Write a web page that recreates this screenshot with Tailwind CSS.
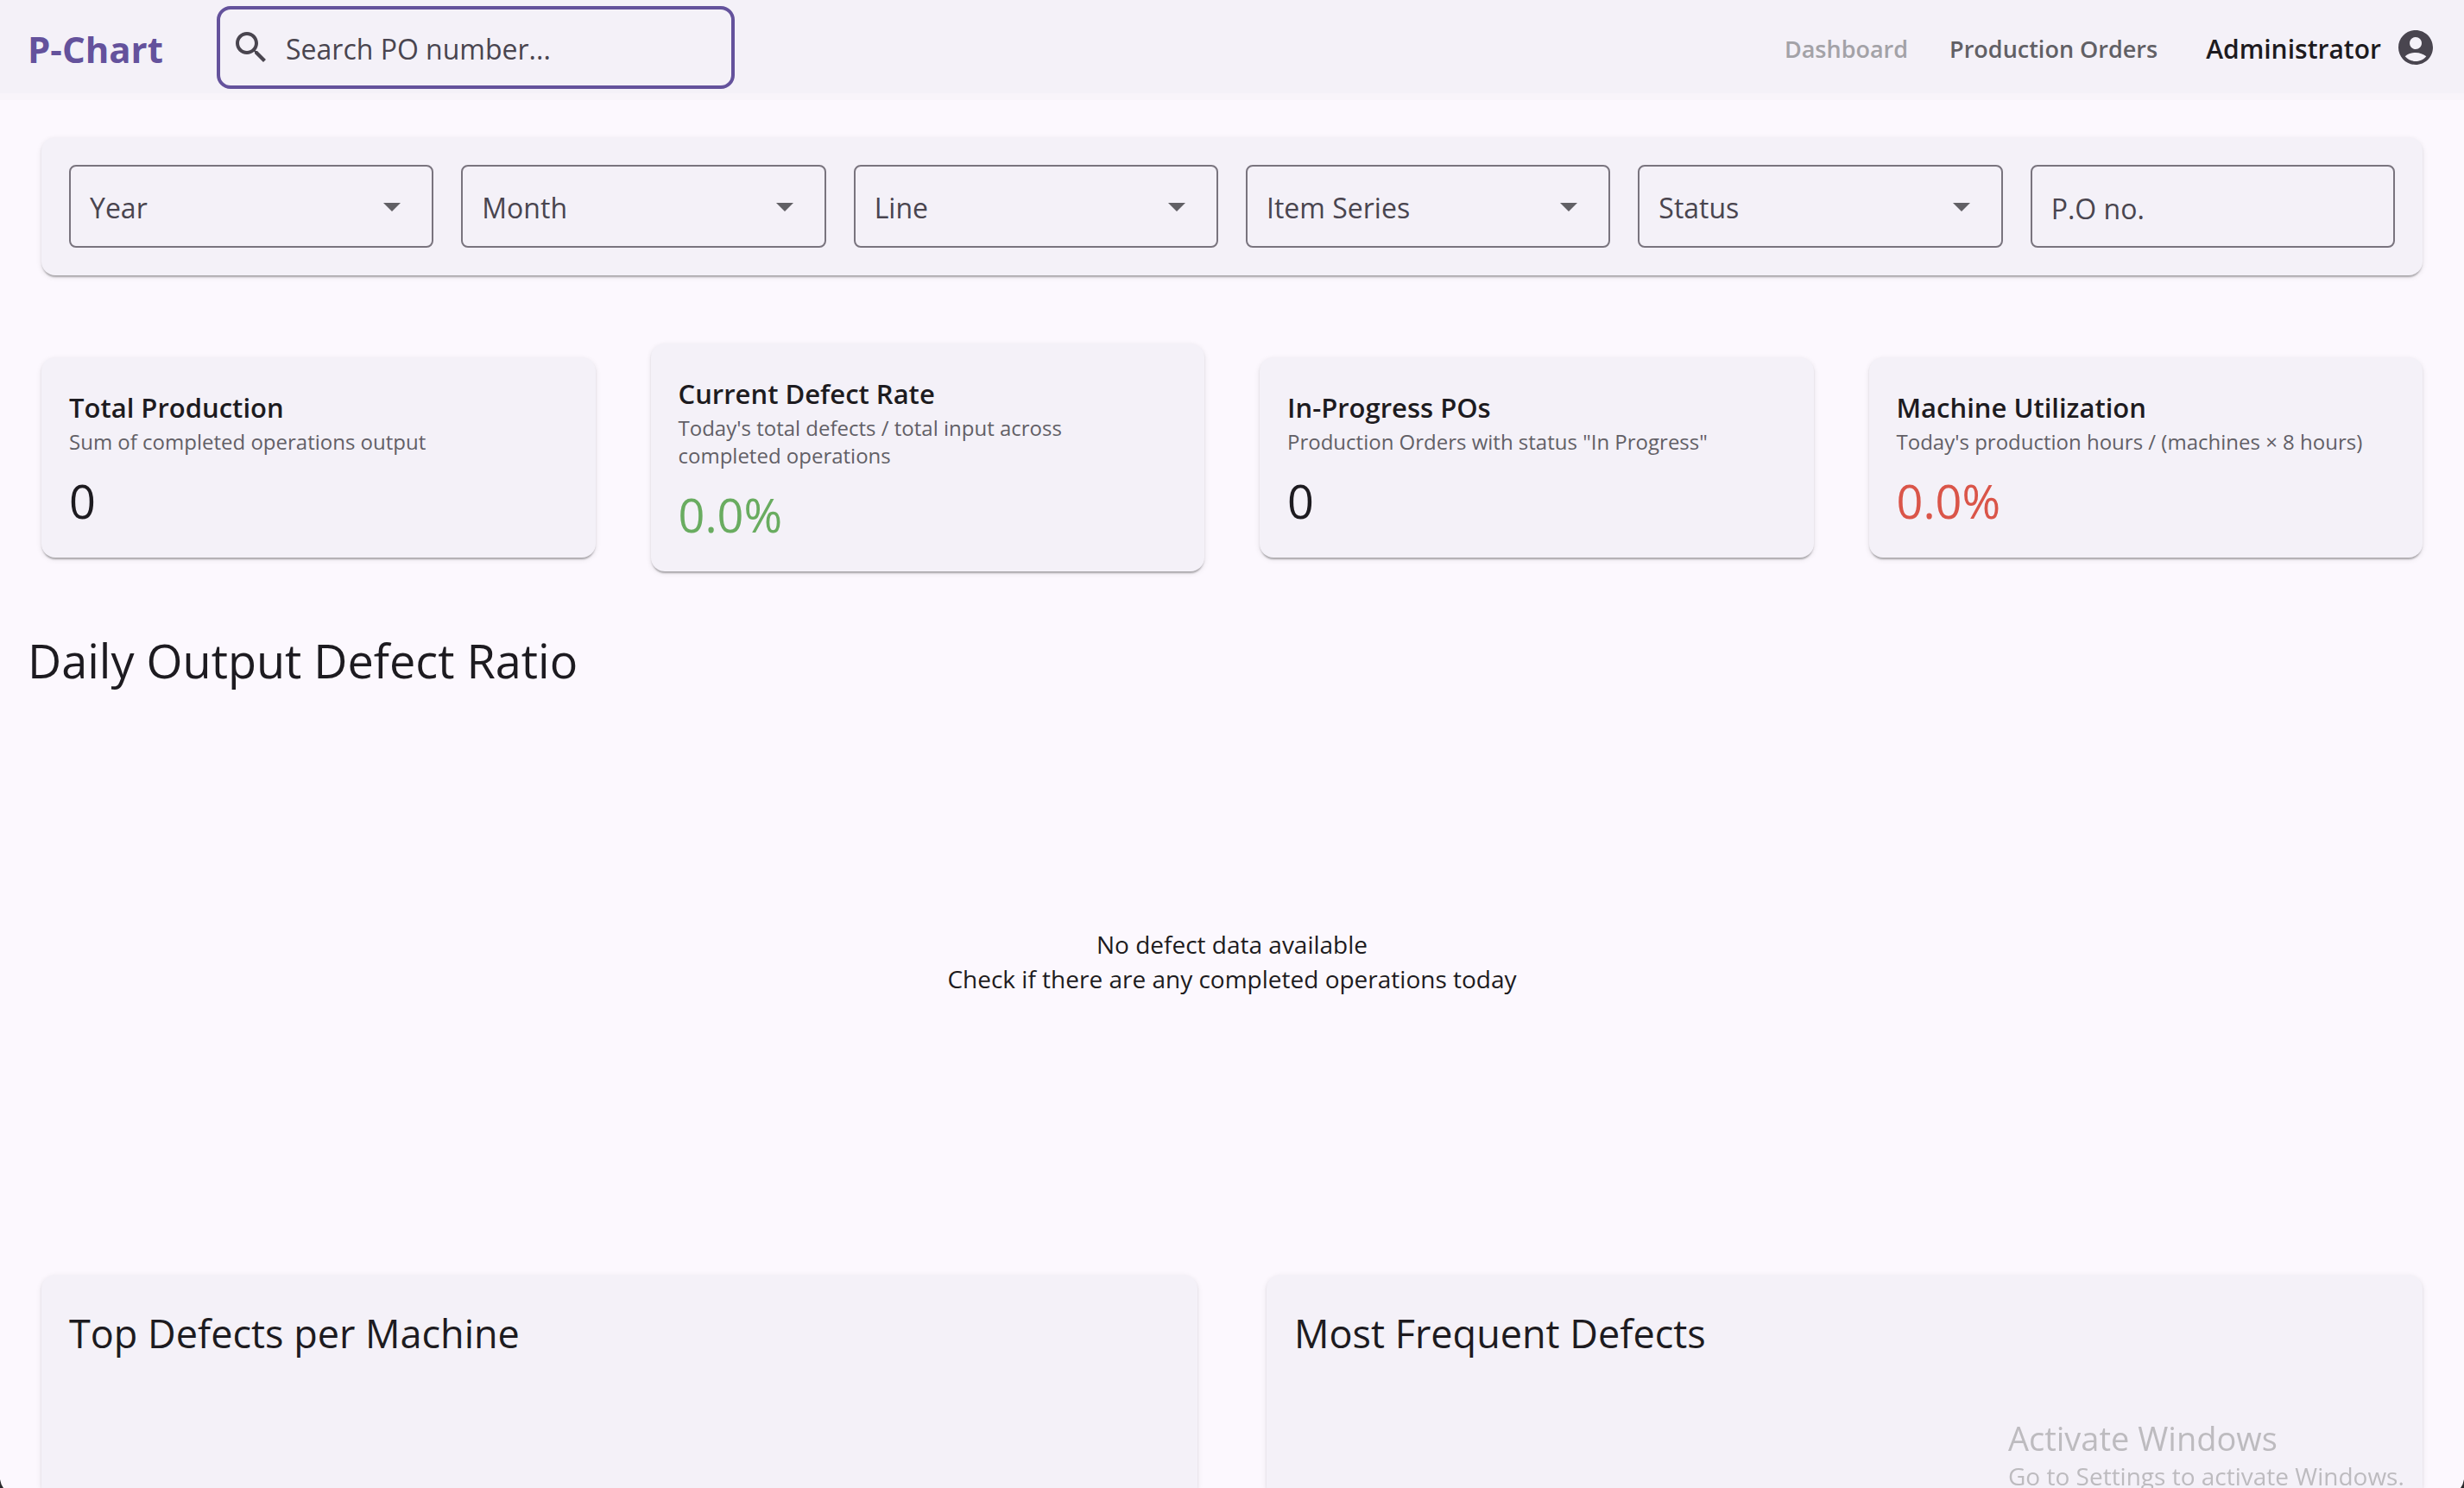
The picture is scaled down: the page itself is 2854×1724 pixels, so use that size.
<!DOCTYPE html>
<html lang="en">
<head>
<meta charset="utf-8">
<meta name="viewport" content="width=device-width, initial-scale=1">
<title>P-Chart</title>
<script src="https://cdn.jsdelivr.net/npm/@tailwindcss/browser@4"></script>
</head>
<body class="flex min-h-screen flex-col overflow-x-hidden bg-[#fcf8fe] font-['Open_Sans','Noto_Sans',sans-serif] text-[#1d1b20]">

<header class="flex items-center border-b-8 border-[#f8f4fa] bg-[#f4f1f8] px-8 pt-[7px] pb-[5px]">
  <a href="#" class="w-[219px] pt-1 text-[42px] leading-[56px] font-bold text-[#64529c]">P-Chart</a>
  <label class="flex h-24 w-[600px] items-center gap-4 rounded-2xl border-4 border-[#64529c] px-3">
    <svg class="size-12 shrink-0 fill-[#49454f]" viewBox="0 0 24 24" aria-hidden="true"><path d="M15.5 14h-.79l-.28-.27C15.41 12.59 16 11.11 16 9.5 16 5.91 13.09 3 9.5 3S3 5.91 3 9.5 5.91 16 9.5 16c1.61 0 3.09-.59 4.23-1.57l.27.28v.79l5 4.99L20.49 19l-4.99-5zm-6 0C7.01 14 5 11.99 5 9.5S7.01 5 9.5 5 14 7.01 14 9.5 11.99 14 9.5 14z"/></svg>
    <input type="text" aria-label="Search PO number" placeholder="Search PO number..." class="min-w-0 flex-1 bg-transparent pt-1 text-[32px] leading-[48px] outline-none placeholder:text-[#49454f]">
  </label>
  <nav class="ml-auto flex items-center gap-12 pt-1 text-[27px] leading-10 font-semibold">
    <a href="#" class="text-[#a3a2a7]">Dashboard</a>
    <a href="#" class="text-[#616065]">Production Orders</a>
  </nav>
  <button type="button" class="ml-14 flex items-center gap-4 text-[30px] leading-[48px] font-semibold">
    <span class="pt-1">Administrator</span>
    <svg class="size-12 fill-[#49454f]" viewBox="0 0 24 24" aria-hidden="true"><path d="M12 2C6.48 2 2 6.48 2 12s4.48 10 10 10 10-4.48 10-10S17.52 2 12 2zm0 4c1.93 0 3.5 1.57 3.5 3.5S13.93 13 12 13s-3.500-1.570-3.500-3.500S10.070 6 12 6zm0 14c-2.030 0-4.430-.82-6.140-2.880C7.550 15.800 9.680 15 12 15s4.450.8 6.140 2.120C16.430 19.180 14.030 20 12 20z"/></svg>
  </button>
</header>

<main class="flex flex-1 flex-col px-12 pt-[43px]">
  <form class="grid grid-cols-6 gap-8 rounded-2xl bg-[#f4f1f8] p-8 text-[32px] leading-[48px] text-[#49454f] shadow-[0_4px_2px_-2px_rgba(0,0,0,0.2),0_2px_2px_rgba(0,0,0,0.1),0_2px_6px_rgba(0,0,0,0.1)]">
    <div class="relative">
      <select aria-label="Year" class="h-24 w-full appearance-none rounded-lg border-2 border-[#79747e] px-[22px] pt-1"><option>Year</option></select>
      <svg class="pointer-events-none absolute top-6 right-6 size-12 fill-[#616065]" viewBox="0 0 24 24"><path d="M7 10l5 5 5-5z"/></svg>
    </div>
    <div class="relative">
      <select aria-label="Month" class="h-24 w-full appearance-none rounded-lg border-2 border-[#79747e] px-[22px] pt-1"><option>Month</option></select>
      <svg class="pointer-events-none absolute top-6 right-6 size-12 fill-[#616065]" viewBox="0 0 24 24"><path d="M7 10l5 5 5-5z"/></svg>
    </div>
    <div class="relative">
      <select aria-label="Line" class="h-24 w-full appearance-none rounded-lg border-2 border-[#79747e] px-[22px] pt-1"><option>Line</option></select>
      <svg class="pointer-events-none absolute top-6 right-6 size-12 fill-[#616065]" viewBox="0 0 24 24"><path d="M7 10l5 5 5-5z"/></svg>
    </div>
    <div class="relative">
      <select aria-label="Item Series" class="h-24 w-full appearance-none rounded-lg border-2 border-[#79747e] px-[22px] pt-1"><option>Item Series</option></select>
      <svg class="pointer-events-none absolute top-6 right-6 size-12 fill-[#616065]" viewBox="0 0 24 24"><path d="M7 10l5 5 5-5z"/></svg>
    </div>
    <div class="relative">
      <select aria-label="Status" class="h-24 w-full appearance-none rounded-lg border-2 border-[#79747e] px-[22px] pt-1"><option>Status</option></select>
      <svg class="pointer-events-none absolute top-6 right-6 size-12 fill-[#616065]" viewBox="0 0 24 24"><path d="M7 10l5 5 5-5z"/></svg>
    </div>
    <input type="text" aria-label="P.O number" placeholder="P.O no." class="h-24 w-full min-w-0 rounded-lg border-2 border-[#79747e] px-[22px] pt-1 outline-none placeholder:text-[#49454f]">
  </form>

  <section class="mt-[79px] grid grid-cols-4 items-center gap-16">
    <article class="rounded-2xl bg-[#f4f1f8] px-8 pt-[34px] pb-[30px] shadow-[0_4px_2px_-2px_rgba(0,0,0,0.2),0_2px_2px_rgba(0,0,0,0.1),0_2px_6px_rgba(0,0,0,0.1)]">
      <h2 class="text-[31px] leading-[48px] font-semibold">Total Production</h2>
      <p class="text-2xl leading-8 text-[#625f66]">Sum of completed operations output</p>
      <p class="mt-4 text-[54px] leading-[72px]">0</p>
    </article>
    <article class="rounded-2xl bg-[#f4f1f8] px-8 pt-[34px] pb-[30px] shadow-[0_4px_2px_-2px_rgba(0,0,0,0.2),0_2px_2px_rgba(0,0,0,0.1),0_2px_6px_rgba(0,0,0,0.1)]">
      <h2 class="text-[31px] leading-[48px] font-semibold">Current Defect Rate</h2>
      <p class="text-2xl leading-8 text-[#625f66]">Today's total defects / total input across<br>completed operations</p>
      <p class="mt-4 text-[54px] leading-[72px] text-[#69ac60]">0.0%</p>
    </article>
    <article class="rounded-2xl bg-[#f4f1f8] px-8 pt-[34px] pb-[30px] shadow-[0_4px_2px_-2px_rgba(0,0,0,0.2),0_2px_2px_rgba(0,0,0,0.1),0_2px_6px_rgba(0,0,0,0.1)]">
      <h2 class="text-[31px] leading-[48px] font-semibold">In-Progress POs</h2>
      <p class="text-2xl leading-8 text-[#625f66]">Production Orders with status "In Progress"</p>
      <p class="mt-4 text-[54px] leading-[72px]">0</p>
    </article>
    <article class="rounded-2xl bg-[#f4f1f8] px-8 pt-[34px] pb-[30px] shadow-[0_4px_2px_-2px_rgba(0,0,0,0.2),0_2px_2px_rgba(0,0,0,0.1),0_2px_6px_rgba(0,0,0,0.1)]">
      <h2 class="text-[31px] leading-[48px] font-semibold">Machine Utilization</h2>
      <p class="text-2xl leading-8 text-[#625f66]">Today's production hours / (machines × 8 hours)</p>
      <p class="mt-4 text-[54px] leading-[72px] text-[#da5549]">0.0%</p>
    </article>
  </section>

  <section class="mt-[67px]">
    <h2 class="-ml-4 text-[54px] leading-[72px]">Daily Output Defect Ratio</h2>
    <div class="mt-7 flex h-[570px] flex-col items-center justify-center text-center text-[28px] leading-10">
      <p>No defect data available</p>
      <p>Check if there are any completed operations today</p>
    </div>
  </section>

  <section class="mt-[78px] grid flex-1 grid-cols-2 gap-20">
    <article class="min-h-[200px] rounded-t-2xl bg-[#f4f1f8] p-8 shadow-[0_2px_2px_rgba(0,0,0,0.1),0_2px_6px_rgba(0,0,0,0.1)]">
      <h2 class="text-[45px] leading-[72px]">Top Defects per Machine</h2>
    </article>
    <article class="min-h-[200px] rounded-t-2xl bg-[#f4f1f8] p-8 shadow-[0_2px_2px_rgba(0,0,0,0.1),0_2px_6px_rgba(0,0,0,0.1)]">
      <h2 class="text-[45px] leading-[72px]">Most Frequent Defects</h2>
    </article>
  </section>
</main>

<!-- System activation notice, over the page -->
<aside class="pointer-events-none fixed right-0 -bottom-1.5 w-[528px] text-[#bdbbbf]">
  <p class="text-[38px] leading-[48px]">Activate Windows</p>
  <p class="text-[28px] leading-10">Go to Settings to activate Windows.</p>
</aside>

<!-- Rounded window corners -->
<svg class="fixed bottom-0 left-0 h-[10px] w-1 fill-[#2b2b2d]" viewBox="0 0 4 10" aria-hidden="true"><path d="M0 0Q1 6 4 10H0z"/></svg>
<svg class="fixed right-0 bottom-0 h-[10px] w-1 fill-[#2b2b2d]" viewBox="0 0 4 10" aria-hidden="true"><path d="M4 0Q3 6 0 10H4z"/></svg>
</body>
</html>
